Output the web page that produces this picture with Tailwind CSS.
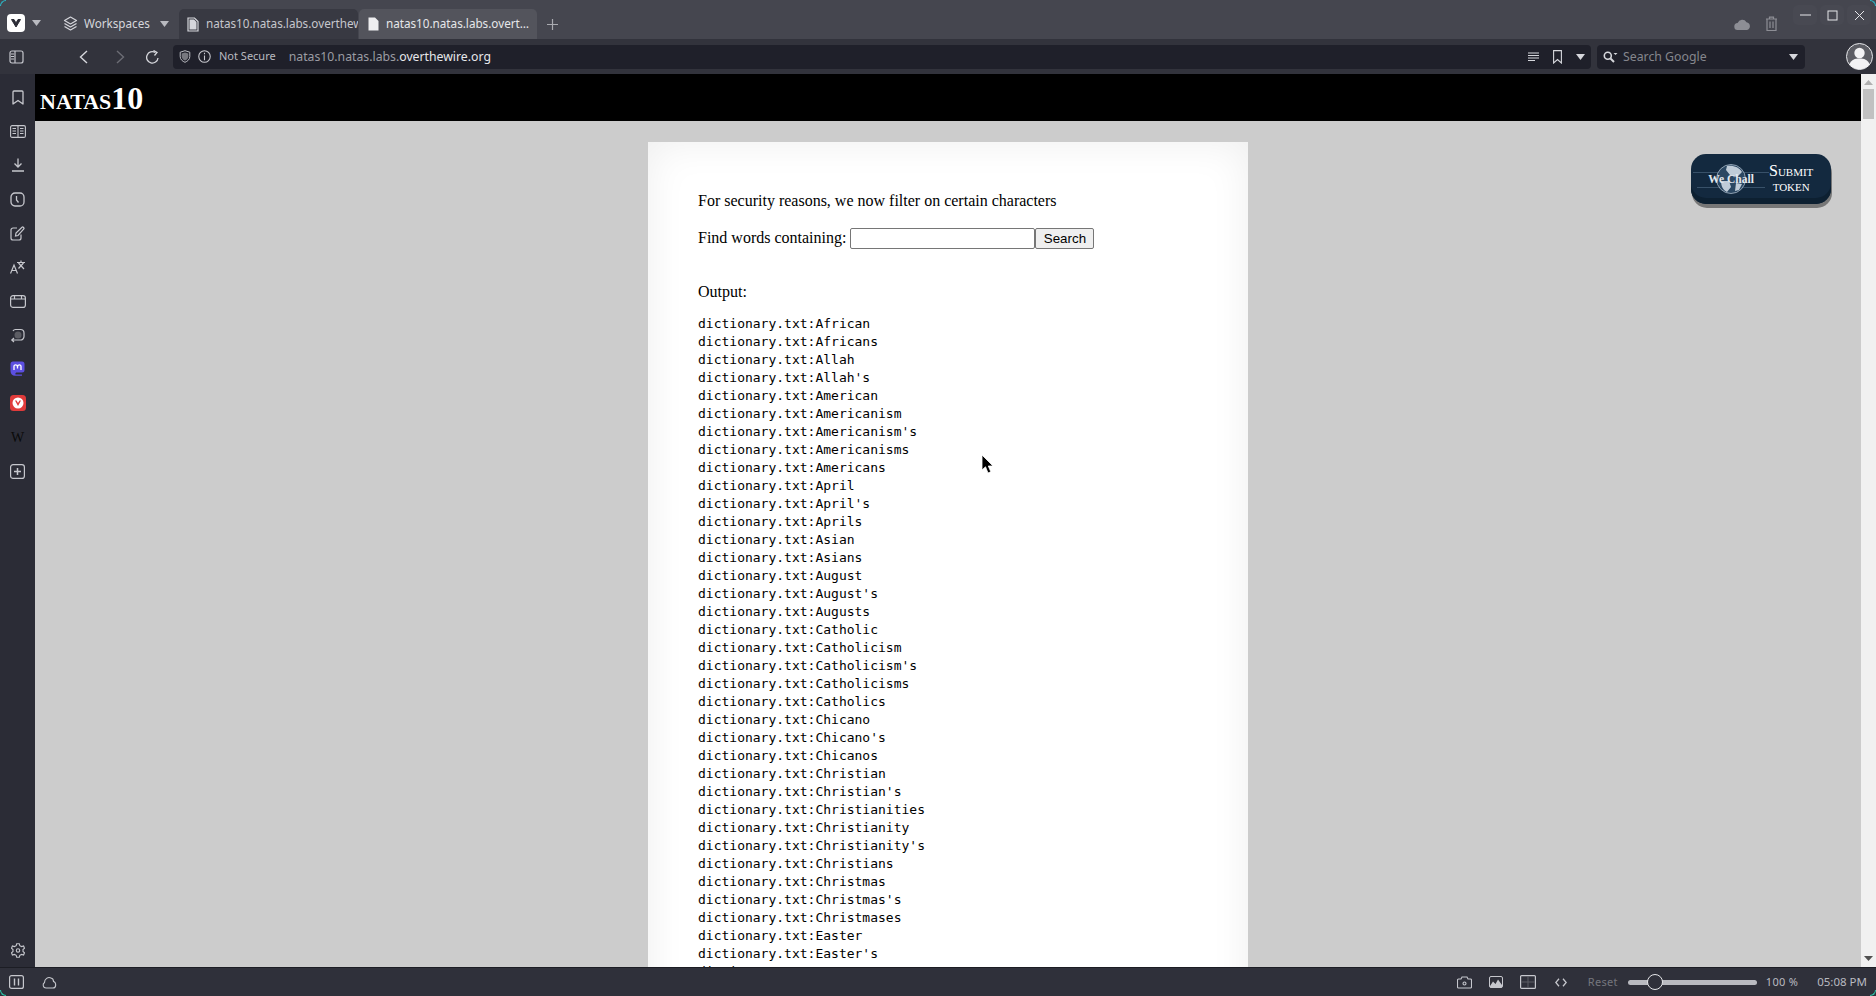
<!DOCTYPE html>
<html lang="en">
<head>
    <meta charset="UTF-8" />
    <title>natas10.natas.labs.overthewire.org</title>
    <script src="https://cdn.jsdelivr.net/npm/@tailwindcss/browser@4"></script>
</head>
<body class="relative h-[996px] w-[1876px] overflow-hidden bg-[#2f303a] font-['Noto_Sans',sans-serif]">

    <!-- Title bar with tabs -->
    <div class="flex h-[39px] items-end bg-[#45464f] text-[11.7px] text-[#d6d7dc]">
        <div class="ml-[7px] mb-[7px] flex h-[18px] w-[18px] items-center justify-center rounded-[4px] bg-white">
            <svg width="12" height="12" viewBox="0 0 12 12"><path d="M1.5 2.5 L6 10 L10.5 2.5 H8 L6 6 L4 2.5 Z" fill="#2b2c36" stroke="#2b2c36" stroke-width="1" stroke-linejoin="round"/></svg>
        </div>
        <svg class="ml-[7px] mb-[13px]" width="9" height="6" viewBox="0 0 9 6"><path d="M0 0H9L4.5 6Z" fill="#b9bac0"/></svg>
        <div class="ml-[22px] mb-[6px] flex items-center">
            <svg width="15" height="16" viewBox="0 0 15 16" fill="none" stroke="#d6d7dc" stroke-width="1.2" stroke-linejoin="round"><path d="M7.5 1 L13.5 4.5 L7.5 8 L1.5 4.5 Z"/><path d="M1.5 7.5 L7.5 11 L13.5 7.5"/><path d="M1.5 10.5 L7.5 14 L13.5 10.5"/></svg>
            <span class="ml-[6px]">Workspaces</span>
            <svg class="ml-[10px]" width="9" height="6" viewBox="0 0 9 6"><path d="M0 0H9L4.5 6Z" fill="#b9bac0"/></svg>
        </div>
        <div class="ml-[10px] flex h-[30px] w-[179px] items-center overflow-hidden rounded-t-[5px] bg-[#383942] pl-[8px] text-[#c6c7cd]">
            <svg class="shrink-0" width="12" height="15" viewBox="0 0 12 15"><path d="M1 1H7.5L11 4.5V14H1Z" fill="none" stroke="#d6d7dc" stroke-width="1.2"/><path d="M2.5 2.5H7L9.5 5V12.5H2.5Z" fill="#d6d7dc"/></svg>
            <span class="ml-[7px] whitespace-nowrap">natas10.natas.labs.overthewire.org</span>
        </div>
        <div class="ml-[1px] flex h-[30px] w-[178px] items-center rounded-t-[5px] bg-[#53545c] pl-[9px] text-[#e6e7ea]">
            <svg class="shrink-0" width="11" height="14" viewBox="0 0 11 14"><path d="M0.5 0.5H7L10.5 4V13.5H0.5Z" fill="#eeeef0"/></svg>
            <span class="ml-[7px] whitespace-nowrap">natas10.natas.labs.overt…</span>
        </div>
        <svg class="ml-[9px] mb-[8px]" width="13" height="13" viewBox="0 0 13 13" stroke="#a9aab0" stroke-width="1.2"><path d="M6.5 1V12M1 6.5H12"/></svg>
        <div class="ml-auto mb-[7px] flex items-center gap-[14px] pr-[98px]">
            <svg width="17" height="11" viewBox="0 0 17 11"><path d="M4 11A3.5 3.5 0 0 1 3.6 4 A5 5 0 0 1 12.5 3.2 A4 4 0 0 1 13 11Z" fill="#8d8e95"/></svg>
            <svg width="13" height="16" viewBox="0 0 13 16" fill="none" stroke="#8d8e95" stroke-width="1.2"><path d="M1 3H12M4.5 3V1.2H8.5V3M2 3V14.5H11V3M5 5.5V12M8 5.5V12"/></svg>
        </div>
        <div class="absolute right-[5px] top-[5px] flex gap-[3px]">
            <div class="flex h-[20px] w-[24px] items-center justify-center rounded-[5px] bg-[#484952]"><svg width="11" height="2"><path d="M0 1H11" stroke="#e6e7ea" stroke-width="1"/></svg></div>
            <div class="flex h-[20px] w-[24px] items-center justify-center rounded-[5px] bg-[#484952]"><svg width="11" height="11" fill="none"><rect x="1" y="1" width="9" height="9" stroke="#e6e7ea" stroke-width="1"/></svg></div>
            <div class="flex h-[20px] w-[24px] items-center justify-center rounded-[5px] bg-[#484952]"><svg width="11" height="11"><path d="M1 1L10 10M10 1L1 10" stroke="#e6e7ea" stroke-width="1"/></svg></div>
        </div>
    </div>

    <!-- Address bar -->
    <div class="flex h-[35px] items-center bg-[#32333c] text-[12px]">
        <svg class="ml-[9px]" width="15" height="14" viewBox="0 0 15 14" fill="none" stroke="#c6c7cd" stroke-width="1.2"><rect x="1" y="1" width="13" height="12" rx="2"/><path d="M6 1V13"/><path d="M2 4H5M2 6.5H5M2 9H5" stroke-width="1"/></svg>
        <svg class="ml-[55px]" width="9" height="14" viewBox="0 0 9 14" fill="none" stroke="#d6d7dc" stroke-width="1.4"><path d="M8 1L1.5 7L8 13"/></svg>
        <svg class="ml-[28px]" width="9" height="14" viewBox="0 0 9 14" fill="none" stroke="#6c6d75" stroke-width="1.4"><path d="M1 1L7.5 7L1 13"/></svg>
        <svg class="ml-[20px]" width="15" height="14" viewBox="0 0 15 14" fill="none" stroke="#d6d7dc" stroke-width="1.3"><path d="M13 8A5.7 5.7 0 1 1 10.3 2.5"/><path d="M8.5 0.5L12 2.5L9.5 5.5" /></svg>
        <div class="ml-[13px] flex h-[24px] w-[1418px] items-center rounded-[4px] bg-[#1f202a] pl-[6px]">
            <svg width="12" height="13" viewBox="0 0 11 13"><path d="M5.5 0.7L10.3 2.2V6.5C10.3 9.5 8 11.3 5.5 12.3C3 11.3 0.7 9.5 0.7 6.5V2.2Z" fill="none" stroke="#b9bac0" stroke-width="1"/><path d="M5.5 2.5L8.8 3.4V6.5C8.8 8.4 7.3 9.8 5.5 10.6C3.7 9.8 2.2 8.4 2.2 6.5V3.4Z" fill="#77787f"/></svg>
            <svg class="ml-[7px]" width="13" height="13" viewBox="0 0 12 12" fill="none" stroke="#c6c7cd"><circle cx="6" cy="6" r="5.3"/><path d="M6 5V9.5M6 2.5V4"/></svg>
            <span class="ml-[8px] text-[11px] text-[#b9bac0]">Not Secure</span>
            <span class="ml-[13px] pt-[1px] text-[12.25px] text-[#9b9ca3]">natas10.natas.labs.<span class="text-[#e6e7ea]">overthewire.org</span></span>
            <svg class="ml-auto" width="11" height="9" viewBox="0 0 11 9" stroke="#d6d7dc"><path d="M0 1H11M0 3.5H11M0 6H11M0 8.5H7"/></svg>
            <svg class="ml-[14px]" width="9" height="14" viewBox="0 0 9 14" fill="none" stroke="#d6d7dc" stroke-width="1.1"><path d="M0.6 0.6H8.4V13L4.5 9.5L0.6 13Z"/></svg>
            <svg class="ml-[14px] mr-[6px]" width="9" height="6" viewBox="0 0 9 6"><path d="M0 0H9L4.5 6Z" fill="#d6d7dc"/></svg>
        </div>
        <div class="ml-[6px] flex h-[24px] w-[208px] items-center rounded-[4px] bg-[#1f202a] pl-[6px]">
            <svg width="15" height="12" viewBox="0 0 15 12" fill="none"><circle cx="4.8" cy="4.8" r="3.5" stroke="#d6d7dc" stroke-width="1.6"/><path d="M7.5 7.5L11 11" stroke="#d6d7dc" stroke-width="2"/><path d="M10.5 2H14.5L12.5 4Z" fill="#d6d7dc"/></svg>
            <span class="ml-[5px] pt-[1px] text-[12.3px] text-[#85868d]">Search Google</span>
            <svg class="ml-auto mr-[7px]" width="9" height="6" viewBox="0 0 9 6"><path d="M0 0H9L4.5 6Z" fill="#d6d7dc"/></svg>
        </div>
        <svg class="ml-[41px]" width="27" height="27" viewBox="0 0 27 27"><circle cx="13.5" cy="13.5" r="13" fill="#5c5d64" stroke="#e6e7ea" stroke-width="1"/><circle cx="13.5" cy="10" r="5.2" fill="#f2f2f4"/><path d="M3.5 21.5C5 16.5 9 15.5 13.5 15.5C18 15.5 22 16.5 23.5 21.5A13 13 0 0 1 3.5 21.5Z" fill="#f2f2f4"/></svg>
    </div>

    <div class="flex h-[893px]">
        <!-- Side panel -->
        <div class="flex w-[35px] shrink-0 flex-col items-center bg-[#2b2c36] pt-[6px]">
            <div class="flex flex-col items-center">
                <div class="flex h-[34px] items-center"><svg width="12" height="15" viewBox="0 0 12 15" fill="none" stroke="#c6c7cd" stroke-width="1.3" stroke-linejoin="round"><path d="M1 2A1 1 0 0 1 2 1H10A1 1 0 0 1 11 2V14L6 10.5L1 14Z"/></svg></div>
                <div class="flex h-[34px] items-center"><svg width="16" height="13" viewBox="0 0 16 13" fill="none" stroke="#c6c7cd" stroke-width="1.1"><rect x="0.6" y="0.6" width="14.8" height="11.8" rx="1.5"/><path d="M8 0.6V12.4M2.5 3.5H6M2.5 6H6M2.5 8.5H6M10 3.5H13.5M10 6H13.5M10 8.5H13.5"/></svg></div>
                <div class="flex h-[34px] items-center"><svg width="14" height="14" viewBox="0 0 14 14" fill="none" stroke="#c6c7cd" stroke-width="1.3"><path d="M7 0.5V8.5M3.5 5.5L7 9L10.5 5.5M1 13H13"/></svg></div>
                <div class="flex h-[34px] items-center"><svg width="15" height="15" viewBox="0 0 15 15" fill="none" stroke="#c6c7cd" stroke-width="1.3"><rect x="1" y="1" width="13" height="13" rx="4"/><path d="M6.5 4V8L8.5 10.5"/></svg></div>
                <div class="flex h-[34px] items-center"><svg width="15" height="15" viewBox="0 0 15 15" fill="none" stroke="#c6c7cd" stroke-width="1.2"><path d="M7 2H3A2 2 0 0 0 1 4V12A2 2 0 0 0 3 14H9A2 2 0 0 0 11 12V8.5"/><path d="M5.5 10L6 7L12 1.2C13 0.5 14.5 2 13.8 3L8 9.5Z"/></svg></div>
                <div class="flex h-[34px] items-center"><svg width="16" height="14" viewBox="0 0 16 14" fill="none" stroke="#c6c7cd" stroke-width="1.2"><path d="M0.5 13.5L4 5L7.5 13.5M1.8 10.5H6.2"/><path d="M7 2.5H15M11 0.5V2.5M8.5 3L14 9M13.5 3L8.5 8.5"/></svg></div>
                <div class="flex h-[34px] items-center"><svg width="16" height="13" viewBox="0 0 16 13" fill="none" stroke="#c6c7cd" stroke-width="1.2"><rect x="0.6" y="0.6" width="14.8" height="11.8" rx="2.5"/><path d="M0.6 4H15.4M4.5 0.6V4M11.5 0.6V4"/></svg></div>
                <div class="flex h-[34px] items-center"><svg width="15" height="15" viewBox="0 0 15 15" fill="none"><circle cx="8" cy="7" r="3.5" fill="#5c5d64"/><path d="M3 3A3 3 0 0 1 5.5 1.5H10.5A3.5 3.5 0 0 1 14 5V8.5A3.5 3.5 0 0 1 10.5 12H2M4 10L1.8 12L4 14" stroke="#c6c7cd" stroke-width="1.2"/></svg></div>
                <div class="flex h-[34px] items-center"><svg width="15" height="16" viewBox="0 0 15 16"><path d="M3 0.5H12A2.5 2.5 0 0 1 14.5 3V9A2.5 2.5 0 0 1 12 11.5H7C6 11.5 5 12 5.5 13.5H12V14.8H5C2.5 14.8 0.5 13 0.5 10V3A2.5 2.5 0 0 1 3 0.5Z" fill="#5c4fe0"/><path d="M4 9V5.2C4 3.5 7 3.5 7.5 5.5C8 3.5 11 3.5 11 5.2V9M7.5 5.5V7.5" fill="none" stroke="#fff" stroke-width="1.3"/></svg></div>
                <div class="flex h-[34px] items-center"><svg width="16" height="16" viewBox="0 0 16 16"><rect width="16" height="16" rx="3.5" fill="#e03b3b"/><circle cx="8" cy="8" r="5.5" fill="#fff"/><path d="M5 5.5L8 11L11 5.5H9.5L8 8L6.5 5.5Z" fill="#e03b3b"/></svg></div>
                <div class="flex h-[34px] items-center font-['Liberation_Serif',serif] text-[14px] text-[#0a0a0a]">W</div>
                <div class="flex h-[34px] items-center"><svg width="15" height="15" viewBox="0 0 15 15" fill="none" stroke="#c6c7cd" stroke-width="1.2"><rect x="0.6" y="0.6" width="13.8" height="13.8" rx="2.5"/><path d="M7.5 4V11M4 7.5H11" stroke-width="1.5"/></svg></div>
            </div>
            <svg class="mt-auto mb-[9px]" width="14" height="15" viewBox="0 0 14 15" fill="none" stroke="#c6c7cd" stroke-width="1.1"><path d="M5.7 0.7H8.3L8.8 2.7L10.6 3.6L12.6 3L13.5 5.2L12 6.5V8.5L13.5 9.8L12.6 12L10.6 11.4L8.8 12.3L8.3 14.3H5.7L5.2 12.3L3.4 11.4L1.4 12L0.5 9.8L2 8.5V6.5L0.5 5.2L1.4 3L3.4 3.6L5.2 2.7Z"/><circle cx="7" cy="7.5" r="1.7"/></svg>
        </div>

        <!-- Page -->
        <div class="relative flex-1 overflow-hidden bg-[#cccccc] font-['Liberation_Serif',serif] text-[16px] text-black">
            <div class="flex h-[47px] items-center bg-black pl-[5px] text-[32px] font-bold leading-none text-white [font-variant:small-caps]">natas10</div>
            <div class="mx-auto mt-[21px] h-[900px] w-[600px] bg-white pl-[50px] pt-[48px] shadow-[inset_0_0_40px_rgba(0,0,0,0.07)]">
                <p class="leading-[22px]">For security reasons, we now filter on certain characters</p>
                <div class="mt-[15px] flex h-[22px] items-center">
                    <span>Find words containing:</span>
                    <input type="text" class="ml-[4px] h-[21px] w-[185px] rounded-[2px] border border-[#767676] bg-white" />
                    <button class="h-[21px] w-[59px] rounded-[2px] border border-[#767676] bg-[#efefef] font-['Liberation_Sans',sans-serif] text-[13.333px] leading-[19px]">Search</button>
                </div>
                <p class="mt-[32px] leading-[22px]">Output:</p>
                <pre class="mt-[12px] font-['DejaVu_Sans_Mono',monospace] text-[13px] leading-[18px] text-black">dictionary.txt:African
dictionary.txt:Africans
dictionary.txt:Allah
dictionary.txt:Allah's
dictionary.txt:American
dictionary.txt:Americanism
dictionary.txt:Americanism's
dictionary.txt:Americanisms
dictionary.txt:Americans
dictionary.txt:April
dictionary.txt:April's
dictionary.txt:Aprils
dictionary.txt:Asian
dictionary.txt:Asians
dictionary.txt:August
dictionary.txt:August's
dictionary.txt:Augusts
dictionary.txt:Catholic
dictionary.txt:Catholicism
dictionary.txt:Catholicism's
dictionary.txt:Catholicisms
dictionary.txt:Catholics
dictionary.txt:Chicano
dictionary.txt:Chicano's
dictionary.txt:Chicanos
dictionary.txt:Christian
dictionary.txt:Christian's
dictionary.txt:Christianities
dictionary.txt:Christianity
dictionary.txt:Christianity's
dictionary.txt:Christians
dictionary.txt:Christmas
dictionary.txt:Christmas's
dictionary.txt:Christmases
dictionary.txt:Easter
dictionary.txt:Easter's
dictionary.txt:Easters</pre>
            </div>

            <!-- WeChall button floats over the page -->
            <div class="absolute right-[30px] top-[80px] flex h-[50px] w-[140px] items-center rounded-[15px] bg-[#13293f] shadow-[inset_0_-6px_0_#0d2031,1px_4px_0_#777777]">
                <div class="relative ml-[17px] flex h-[34px] w-[46px] items-center justify-center">
                    <svg class="absolute left-[-17px] top-[2px]" width="80" height="30" viewBox="0 0 80 30">
                        <path d="M2 8.5H78M6 23.5H74" stroke="#6f8aa3" stroke-width="0.7" opacity="0.6"/>
                        <circle cx="40" cy="15" r="14.5" fill="#2c4863" stroke="#a9b9c8" stroke-width="0.8"/>
                        <path d="M36 2C42 1 48 3 51 8L46 13L39 11L35 6ZM30 17L38 17L40 23L36 28C32 26 30 22 30 17ZM45 19L51 20L48 26L44 27Z" fill="#c0ccd8"/>
                    </svg>
                    <span class="relative pt-[2px] whitespace-nowrap text-[11.5px] font-bold leading-none text-[#e4e9ef]">We Chall</span>
                </div>
                <div class="ml-[15px] flex flex-col items-center pb-[3px] text-[16px] leading-[15px] text-white [font-variant:small-caps]">
                    <span>Submit</span>
                    <span>token</span>
                </div>
            </div>

            <!-- Mouse pointer -->
            <svg class="absolute left-[946px] top-[380px]" width="13" height="21" viewBox="0 0 13 21"><path d="M1 1V16L4.5 12.8L7 19L9.8 17.8L7.3 12H12Z" fill="#000" stroke="#fff" stroke-width="0.8"/></svg>
        </div>

        <!-- Scrollbar -->
        <div class="flex w-[15px] shrink-0 flex-col items-center bg-[#f1f1f1]">
            <svg class="mt-[6px]" width="9" height="5" viewBox="0 0 9 5"><path d="M0 5H9L4.5 0Z" fill="#b0b0b0"/></svg>
            <div class="mt-[4px] h-[30px] w-[11px] bg-[#c1c1c1]"></div>
            <svg class="mt-auto mb-[6px]" width="9" height="5" viewBox="0 0 9 5"><path d="M0 0H9L4.5 5Z" fill="#505050"/></svg>
        </div>
    </div>

    <!-- Status bar -->
    <div class="flex h-[29px] items-center border-t border-[#1c1d24] bg-[#2f303a] text-[11px] text-[#b9bac0]">
        <svg class="ml-[9px]" width="15" height="14" viewBox="0 0 15 14" fill="none" stroke="#c6c7cd" stroke-width="1.2"><rect x="0.6" y="0.6" width="13.8" height="12.8" rx="2"/><path d="M5.5 3.5V10.5M9.5 3.5V10.5" stroke-width="1.4"/></svg>
        <svg class="ml-[18px]" width="15" height="13" viewBox="0 0 15 13" fill="none" stroke="#c6c7cd" stroke-width="1.1"><path d="M4 12A3 3 0 0 1 2.5 6.5C2.5 3 6 0.5 9 2C11 2.5 11.5 4.5 11.5 5.5C14.5 6.5 14.5 12 11 12Z"/></svg>
        <div class="ml-auto flex items-center">
            <svg width="15" height="13" viewBox="0 0 15 13" fill="none" stroke="#c6c7cd" stroke-width="1.1"><path d="M1.5 3H4L5 1H10L11 3H13.5A1 1 0 0 1 14.5 4V11A1 1 0 0 1 13.5 12H1.5A1 1 0 0 1 0.5 11V4A1 1 0 0 1 1.5 3Z"/><circle cx="7.5" cy="7.5" r="1.5"/></svg>
            <svg class="ml-[17px]" width="14" height="12" viewBox="0 0 14 12"><rect x="0.5" y="0.5" width="13" height="11" rx="1.5" fill="none" stroke="#c6c7cd"/><path d="M1 10L4 5.5L6.5 8L9 3.5L13 9V11.5H1Z" fill="#c6c7cd"/></svg>
            <svg class="ml-[17px]" width="16" height="14" viewBox="0 0 16 14" fill="none"><rect x="0.6" y="0.6" width="14.8" height="12.8" rx="1" stroke="#c6c7cd" stroke-width="1.2"/><path d="M8 1V13M1 7H15" stroke="#5c5d64"/></svg>
            <svg class="ml-[19px]" width="12" height="9" viewBox="0 0 12 9" fill="none" stroke="#c6c7cd" stroke-width="1.3"><path d="M4 0.8L0.8 4.5L4 8.2M8 0.8L11.2 4.5L8 8.2"/></svg>
            <span class="ml-[21px] text-[#75767d] tracking-[0.3px]">Reset</span>
            <div class="relative ml-[10px] h-[5px] w-[129px] rounded-full bg-[#b9bac0]">
                <div class="absolute left-[19px] top-[-6px] h-[16px] w-[16px] rounded-full border border-[#e6e7ea] bg-[#2f303a]"></div>
            </div>
            <span class="ml-[9px] tracking-[0.3px]">100 %</span>
            <span class="ml-[19px] mr-[9px] text-[11.5px]">05:08 PM</span>
        </div>
    </div>

    <!-- Window corner accents -->
    <div class="absolute left-0 top-0 h-[6px] w-[6px] rounded-tl-[6px] border-l border-t border-[#2bb8c8]"></div>
    <div class="absolute right-0 top-0 h-[6px] w-[6px] rounded-tr-[6px] border-r border-t border-[#2bb8c8]"></div>
    <div class="absolute bottom-0 left-0 h-[6px] w-[6px] rounded-bl-[6px] border-b border-l border-[#2bc8a8]"></div>
    <div class="absolute bottom-0 right-0 h-[6px] w-[6px] rounded-br-[6px] border-b border-r border-[#2bc8a8]"></div>
</body>
</html>
